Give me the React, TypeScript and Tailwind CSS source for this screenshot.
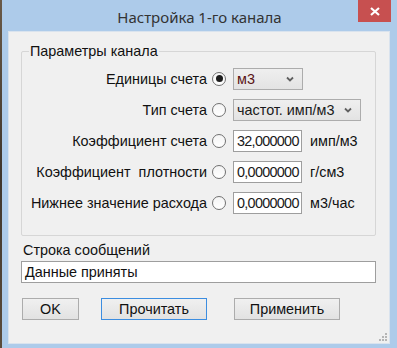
import type { ReactNode } from "react";

const font = { fontFamily: '"Liberation Sans", Arial, sans-serif' };

function Radio({ checked }: { checked?: boolean }) {
  return (
    <span className="flex h-[14px] w-[14px] shrink-0 items-center justify-center rounded-full border border-[#707070] bg-gradient-to-b from-[#f4f4f4] to-white">
      {checked && <span className="h-[7px] w-[7px] rounded-full bg-[#1c1c1c]" />}
    </span>
  );
}

function Chevron() {
  return (
    <svg width="8" height="6" viewBox="0 0 8 6" fill="none" aria-hidden="true">
      <path d="M1 1.5L4 4.5L7 1.5" stroke="#606060" strokeWidth="1.8" />
    </svg>
  );
}

function Select({ value, width, color }: { value: string; width: string; color?: string }) {
  return (
    <div
      className={`flex h-[22px] items-center justify-between border border-[#acacac] bg-gradient-to-b from-[#efefef] to-[#e3e3e3] pl-[3px] pr-[8px] ${width}`}
    >
      <span className={color ?? "text-[#1a1a1a]"}>{value}</span>
      <Chevron />
    </div>
  );
}

function Field({ value }: { value: string }) {
  return (
    <div className="flex h-[22px] w-[69px] items-center border border-[#9e9e9e] bg-white pl-[3px] tracking-[-0.7px] text-[#1a1a1a]">
      {value}
    </div>
  );
}

function Row({
  label,
  checked,
  children,
}: {
  label: string;
  checked?: boolean;
  children: ReactNode;
}) {
  return (
    <div className="flex h-[31px] items-center">
      <span className="w-[185px] whitespace-pre text-right text-[#111]">{label}</span>
      <span className="ml-[5px]">
        <Radio checked={checked} />
      </span>
      <div className="ml-[7px] flex items-center">{children}</div>
    </div>
  );
}

function Unit({ children }: { children: ReactNode }) {
  return <span className="ml-[8px] text-[#111]">{children}</span>;
}

function Button({ label, width, focused }: { label: string; width: string; focused?: boolean }) {
  return (
    <button
      className={`flex h-[22px] items-center justify-center border bg-gradient-to-b from-[#f0f0f0] to-[#e2e2e2] text-[#111] ${width} ${
        focused ? "border-[#3c8de0]" : "border-[#acacac]"
      }`}
    >
      {label}
    </button>
  );
}

function Grip() {
  const dots = [
    [6, 0],
    [3, 3],
    [6, 3],
    [0, 6],
    [3, 6],
    [6, 6],
  ];
  return (
    <svg
      className="absolute bottom-[2px] right-[2px]"
      width="8"
      height="8"
      viewBox="0 0 8 8"
      aria-hidden="true"
    >
      {dots.map(([x, y]) => (
        <rect key={`${x}-${y}`} x={x} y={y} width="2" height="2" fill="#b5b5b5" />
      ))}
    </svg>
  );
}

export default function App() {
  return (
    <div className="flex h-[348px] w-[397px] overflow-hidden text-[14.4px] leading-[16px]" style={font}>
      <div className="w-[2px] bg-gradient-to-b from-[#6a5a48] via-[#3f362d] to-[#5b4c3c]" />
      <div className="flex flex-1 flex-col bg-[#adcbea]">
        <div className="relative flex h-[31px] items-center justify-center pt-[2px]">
          <span
            className="text-[15px] text-[#333]"
            style={{ fontFamily: '"Noto Sans", "Open Sans", sans-serif' }}
          >
            Настройка 1-го канала
          </span>
          <div className="absolute right-[6px] top-0 flex h-[22px] w-[33px] items-center justify-center bg-[#c75050]">
            <svg width="10" height="9" viewBox="0 0 10 9" aria-hidden="true">
              <path d="M1 1L9 8M9 1L1 8" stroke="white" strokeWidth="2.2" />
            </svg>
          </div>
        </div>

        <div className="relative mb-[4px] ml-[6px] mr-[7px] flex-1 border border-[#d9e3ee] bg-[#f0f0f0] pl-[12px] pr-[13px] pt-[19px]">
          <div className="relative rounded-[2px] border border-[#d6d6d6] pb-[17px] pt-[11px]">
            <span className="absolute -top-[9px] left-[7px] bg-[#f0f0f0] px-[1px] text-[#111]">
              Параметры канала
            </span>
            <Row label="Единицы счета" checked>
              <Select value="м3" width="w-[70px]" color="text-[#5a1414]" />
            </Row>
            <Row label="Тип счета">
              <Select value="частот. имп/м3" width="w-[128px]" />
            </Row>
            <Row label="Коэффициент счета">
              <Field value="32,000000" />
              <Unit>имп/м3</Unit>
            </Row>
            <Row label="Коэффициент  плотности">
              <Field value="0,0000000" />
              <Unit>г/см3</Unit>
            </Row>
            <Row label="Нижнее значение расхода">
              <Field value="0,0000000" />
              <Unit>м3/час</Unit>
            </Row>
          </div>

          <div className="mt-[6px] pl-[2px] text-[#111]">Строка сообщений</div>
          <div className="mt-[3px] flex h-[22px] items-center border border-[#9e9e9e] bg-white pl-[3px] text-[#111]">
            Данные приняты
          </div>

          <div className="mt-[15px] flex pl-[1px]">
            <Button label="OK" width="w-[57px]" />
            <div className="ml-[22px]">
              <Button label="Прочитать" width="w-[106px]" focused />
            </div>
            <div className="ml-[27px]">
              <Button label="Применить" width="w-[106px]" />
            </div>
          </div>
          <Grip />
        </div>
      </div>
    </div>
  );
}
